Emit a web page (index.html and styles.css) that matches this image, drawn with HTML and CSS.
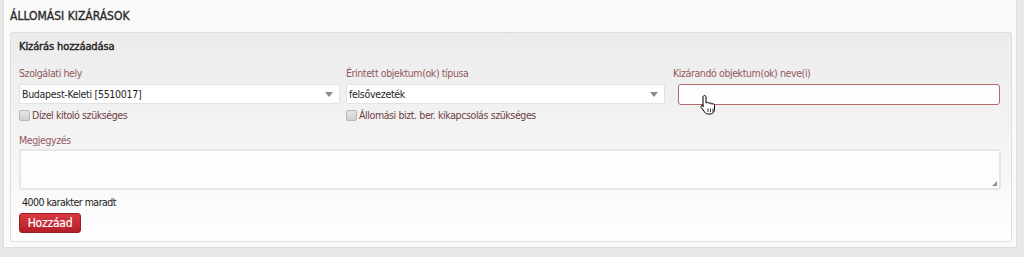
FILE: index.html
```html
<!DOCTYPE html>
<html lang="hu">
<head>
<meta charset="utf-8">
<title>Állomási kizárások</title>
<link rel="stylesheet" href="styles.css">
</head>
<body>
<div class="outer">
  <h1 class="title">ÁLLOMÁSI KIZÁRÁSOK</h1>
  <div class="panel">
    <h2 class="panel-title">Kizárás hozzáadása</h2>
    <div class="row">
      <div class="col col1">
        <label class="lbl">Szolgálati hely</label>
        <div class="select s1"><span>Budapest-Keleti [5510017]</span><i class="arrow"></i></div>
        <label class="chk"><span class="box"></span>Dízel kitoló szükséges</label>
      </div>
      <div class="col col2">
        <label class="lbl">Érintett objektum(ok) típusa</label>
        <div class="select s2"><span>felsővezeték</span><i class="arrow"></i></div>
        <label class="chk"><span class="box"></span>Állomási bizt. ber. kikapcsolás szükséges</label>
      </div>
      <div class="col col3">
        <label class="lbl">Kizárandó objektum(ok) neve(i)</label>
        <div class="input"></div>
        <svg class="cursor" width="16" height="22" viewBox="0 0 16 22">
          <path d="M4.5 1.5c.8 0 1.5.7 1.5 1.5v6.2c.3-.5.9-.8 1.5-.8.8 0 1.4.5 1.5 1.2.3-.4.8-.7 1.3-.7.8 0 1.4.5 1.5 1.3.3-.3.7-.5 1.2-.5.9 0 1.5.7 1.5 1.5v4.3c0 2.6-2 4.5-4.5 4.5H8.2c-1.4 0-2.6-.6-3.4-1.7L1.3 13.6c-.5-.7-.3-1.6.3-2 .6-.4 1.4-.3 1.9.3L3 12.6V3c0-.8.7-1.5 1.5-1.5z" fill="#fff" stroke="#000" stroke-width="1"/>
          <path d="M8 14.5v3.5M10.5 14.5v3.5M13 14.5v3.5" stroke="#000" stroke-width="0.8"/>
        </svg>
      </div>
    </div>
    <label class="lbl lbl-note">Megjegyzés</label>
    <div class="textarea"><i class="grip"></i></div>
    <div class="counter">4000 karakter maradt</div>
    <button class="btn">Hozzáad</button>
  </div>
</div>
</body>
</html>
```

FILE: styles.css
```css
html, body {
  margin: 0;
  padding: 0;
}
body {
  background: #e8e8e8;
  font-family: "DejaVu Sans Condensed", "DejaVu Sans", sans-serif;
  font-stretch: condensed;
  font-size: 10.5px;
  letter-spacing: -0.4px;
  color: #222;
  width: 1024px;
  height: 257px;
  overflow: hidden;
}
.outer {
  margin-left: 3px;
  width: 1002px;
  height: 247px;
  background: #fafafa;
  border: 1px solid #dcdcdc;
  border-top: none;
  padding: 0 4px 0 6px;
}
.title {
  margin: 0;
  padding: 8px 0 0 0;
  height: 24px;
  box-sizing: border-box;
  font-size: 12px;
  font-weight: normal;
  letter-spacing: 0;
  color: #2a2a2a;
  line-height: 16px;
  -webkit-text-stroke: 0.35px #2a2a2a;
}
.panel {
  margin-top: 8px;
  width: 1002px;
  height: 210px;
  box-sizing: border-box;
  border: 1px solid #dedede;
  border-radius: 2px;
  background: linear-gradient(#ececec 0%, #f4f4f4 55%, #ffffff 100%);
  padding: 7px 10px 0 8px;
}
.panel-title {
  margin: 0;
  font-size: 11px;
  font-weight: normal;
  letter-spacing: -0.1px;
  -webkit-text-stroke: 0.4px #222;
  color: #222;
  line-height: 14px;
}
.row {
  display: grid;
  grid-template-columns: 327px 327px 1fr;
  margin-top: 12px;
}
.col {
  display: flex;
  flex-direction: column;
  position: relative;
}
.lbl {
  display: block;
  color: #93585a;
  line-height: 14px;
  height: 14px;
}
.select {
  margin-top: 4px;
  height: 20px;
  box-sizing: border-box;
  background: #fff;
  border: 1px solid #e2e2e2;
  border-radius: 2px;
  display: flex;
  align-items: center;
  justify-content: space-between;
  padding: 0 6px 0 2px;
  color: #1e1e1e;
  letter-spacing: -0.3px;
}
.s1 { width: 321px; }
.s2 { width: 319px; }
.arrow {
  width: 0;
  height: 0;
  border-left: 4px solid transparent;
  border-right: 4px solid transparent;
  border-top: 5px solid #8a8a8a;
}
.input {
  margin-top: 4px;
  margin-left: 5px;
  width: 322px;
  height: 21px;
  box-sizing: border-box;
  border: 1px solid #b36a6d;
  border-radius: 3px;
  background: #fffdfd;
}
.cursor {
  position: absolute;
  left: 27px;
  top: 28px;
}
.chk {
  display: flex;
  align-items: center;
  margin-top: 4px;
  height: 14px;
  color: #6f3c3e;
}
.box {
  width: 9px;
  height: 9px;
  border: 1px solid #b8b8b8;
  border-radius: 2px;
  background: linear-gradient(#e6e6e6, #cfcfcf);
  margin-right: 2px;
}
.lbl-note {
  margin-top: 11px;
}
.textarea {
  margin-top: 2px;
  width: 982px;
  height: 41px;
  box-sizing: border-box;
  border: 2px solid #e7e7e7;
  border-radius: 3px;
  background: #fdfdfd;
  position: relative;
}
.grip {
  position: absolute;
  right: 2px;
  bottom: 2px;
  width: 0;
  height: 0;
  border-left: 5px solid transparent;
  border-bottom: 5px solid #909090;
}
.counter {
  margin-top: 5px;
  margin-left: 3px;
  line-height: 14px;
  letter-spacing: -0.5px;
  color: #1a1a1a;
}
.btn {
  display: block;
  margin-top: 4px;
  width: 62px;
  height: 20px;
  border: 1px solid #9d1b22;
  border-radius: 3px;
  background: linear-gradient(#d83a42, #b41e26);
  color: #fff;
  font-family: "DejaVu Sans Condensed", "DejaVu Sans", sans-serif;
  font-stretch: condensed;
  font-size: 12px;
  letter-spacing: -0.2px;
  -webkit-text-stroke: 0.2px #fff;
  padding: 0;
  line-height: 17px;
}
```
